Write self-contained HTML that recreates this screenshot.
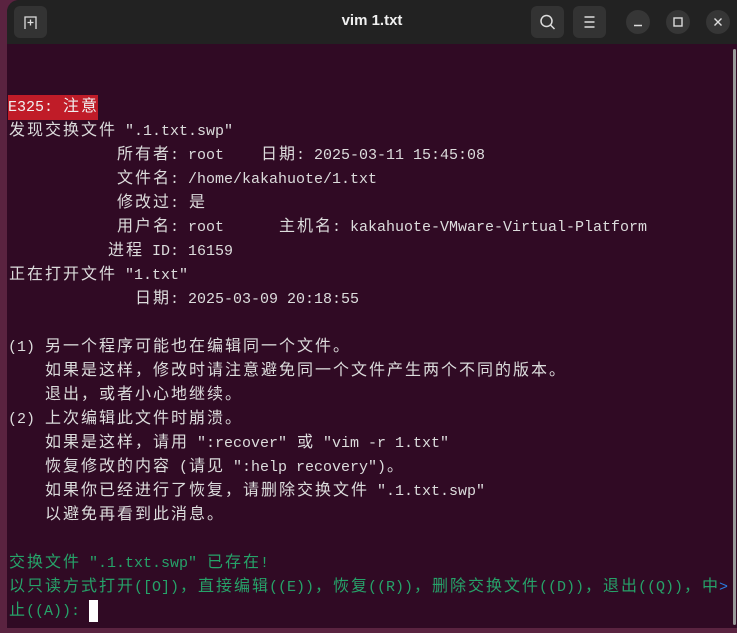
<!DOCTYPE html>
<html><head><meta charset="utf-8"><style>
body{margin:0;width:737px;height:633px;overflow:hidden;background:#5a2340;position:relative;font-family:"Liberation Sans",sans-serif}
.win{position:absolute;left:7px;top:0;width:740px;height:628px;background:#300a24;border-radius:12px 12px 0 0;overflow:hidden}
.bar{position:absolute;left:0;top:0;right:0;height:44px;background:#222222}
.btn{position:absolute;top:6px;height:32px;width:33px;background:#333;border-radius:6px}
.circ{position:absolute;top:10px;width:24px;height:24px;border-radius:50%;background:#363636}
.title{position:absolute;top:12px;left:0;width:730px;text-align:center;color:#f0f0f0;font-weight:bold;font-size:15px}
.term{position:absolute;left:8px;top:95px;font-family:"Liberation Mono","Noto Sans CJK SC",monospace;font-size:15px;color:#dcdcdc}
.l{height:24px;line-height:24px;white-space:pre}
.l span{display:inline-block;width:9px;text-align:center}
.l span.w{width:18px;font-size:16px}
.l span.red{width:auto;background:#c01c28;color:#f0f0f0}
.g{color:#26a269}
.cur{display:inline-block;width:9px;height:22px;background:#fff;vertical-align:middle}
</style></head><body>
<div class="win">
<div class="bar">
 <div class="btn" style="left:7px"><svg width="33" height="32"><path d="M11 23V11h11v12M16.5 13.5v6M13.5 16.5h6" stroke="#ddd" stroke-width="1.3" fill="none"/></svg></div>
 <div class="title">vim 1.txt</div>
 <div class="btn" style="left:524px"><svg width="33" height="32"><circle cx="15.5" cy="15" r="5.5" stroke="#ddd" stroke-width="1.5" fill="none"/><path d="M19.5 19l4 4" stroke="#ddd" stroke-width="1.5"/></svg></div>
 <div class="btn" style="left:566px"><svg width="33" height="32"><path d="M11.5 11h10M11.5 16h10M11.5 21h10" stroke="#ddd" stroke-width="1.4"/></svg></div>
 <div class="circ" style="left:619px"><svg width="24" height="24"><path d="M8 15.5h8" stroke="#ddd" stroke-width="1.5"/></svg></div>
 <div class="circ" style="left:659px"><svg width="24" height="24"><rect x="8" y="8" width="8" height="8" stroke="#ddd" stroke-width="1.4" fill="none"/></svg></div>
 <div class="circ" style="left:699px"><svg width="24" height="24"><path d="M8.5 8.5l7 7M15.5 8.5l-7 7" stroke="#ddd" stroke-width="1.4"/></svg></div>
</div>
<div style="position:absolute;left:726px;top:49px;width:3px;height:576px;background:#9a9a9a;border-radius:2px"></div>
</div>
<div class="term" id="t">
<div class="l"><span class="red">E325: 注意</span></div>
<div class="l">发现交换文件 ".1.txt.swp"</div>
<div class="l">            所有者: root    日期: 2025-03-11 15:45:08</div>
<div class="l">            文件名: /home/kakahuote/1.txt</div>
<div class="l">            修改过: 是</div>
<div class="l">            用户名: root      主机名: kakahuote-VMware-Virtual-Platform</div>
<div class="l">           进程 ID: 16159</div>
<div class="l">正在打开文件 "1.txt"</div>
<div class="l">              日期: 2025-03-09 20:18:55</div>
<div class="l"> </div>
<div class="l">(1) 另一个程序可能也在编辑同一个文件。</div>
<div class="l">    如果是这样，修改时请注意避免同一个文件产生两个不同的版本。</div>
<div class="l">    退出，或者小心地继续。</div>
<div class="l">(2) 上次编辑此文件时崩溃。</div>
<div class="l">    如果是这样，请用 ":recover" 或 "vim -r 1.txt"</div>
<div class="l">    恢复修改的内容 (请见 ":help recovery")。</div>
<div class="l">    如果你已经进行了恢复，请删除交换文件 ".1.txt.swp"</div>
<div class="l">    以避免再看到此消息。</div>
<div class="l"> </div>
<div class="l g">交换文件 ".1.txt.swp" 已存在!</div>
<div class="l g">以只读方式打开([O])，直接编辑((E))，恢复((R))，删除交换文件((D))，退出((Q))，中<b style="color:#2a7bde;font-weight:normal">&gt;</b></div>
<div class="l g" id="last">止((A)): </div>
</div>
<script>
function wrap(el){
 var nodes=[].slice.call(el.childNodes);
 nodes.forEach(function(n){
  if(n.nodeType==3){
   var f=document.createDocumentFragment();
   for(var c of n.textContent){
    if(c=='\n')continue;
    var s=document.createElement('span');
    s.textContent=c==' '?'\u00a0':c;
    if(c.charCodeAt(0)>0x2e00)s.className='w';
    f.appendChild(s);
   }
   n.parentNode.replaceChild(f,n);
  } else if(n.nodeType==1){ if(n.tagName=='B'){n.style.display='inline-block';n.style.width='9px';n.style.textAlign='center';} else wrap(n);}
 });
}
document.querySelectorAll('.l').forEach(wrap);
var c=document.createElement('i');c.className='cur';document.getElementById('last').appendChild(c);
</script>
</body></html>
